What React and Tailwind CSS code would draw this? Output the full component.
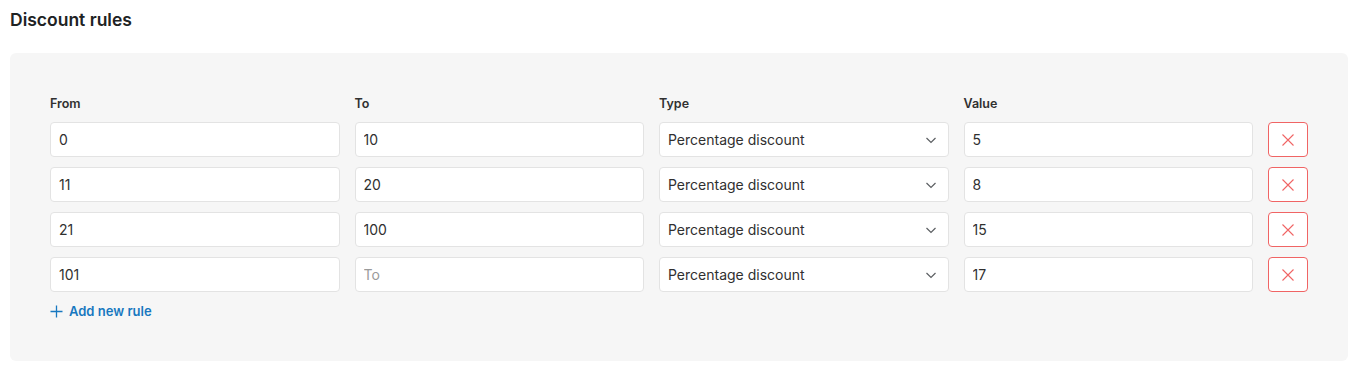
import React from 'react';

const rules = [
  { from: '0', to: '10', value: '5' },
  { from: '11', to: '20', value: '8' },
  { from: '21', to: '100', value: '15' },
  { from: '101', to: '', value: '17' },
];

function Field({ value, placeholder }) {
  return (
    <input
      readOnly
      value={value}
      placeholder={placeholder}
      className="h-[35px] w-full rounded-[4px] border border-[#e3e3e3] bg-white px-2 text-[14px] text-[#303030] placeholder:text-[#9a9a9a] outline-none"
    />
  );
}

export default function App() {
  return (
    <div className="bg-white px-[10px] pt-[10px] pb-[12px] font-['Inter',sans-serif] text-[#303030]">
      <h2 className="text-[17.5px] font-semibold leading-[20px] text-[#202223]">Discount rules</h2>
      <div className="mt-[23px] rounded-[6px] bg-[#f6f6f6] px-[40px] pt-[43px] pb-[39px]">
        <div className="grid grid-cols-[1fr_1fr_1fr_1fr_40px] gap-x-[15px] gap-y-[10px]">
          <div className="text-[12.5px] font-semibold leading-[16px]">From</div>
          <div className="text-[12.5px] font-semibold leading-[16px]">To</div>
          <div className="text-[12.5px] font-semibold leading-[16px]">Type</div>
          <div className="text-[12.5px] font-semibold leading-[16px]">Value</div>
          <div />
          {rules.map((r, i) => (
            <React.Fragment key={i}>
              <Field value={r.from} />
              <Field value={r.to} placeholder="To" />
              <div className="flex h-[35px] items-center justify-between rounded-[4px] border border-[#e3e3e3] bg-white pl-2 pr-[10px] text-[14px]">
                <span>Percentage discount</span>
                <svg width="14" height="14" viewBox="0 0 14 14" fill="none" stroke="#5c5f62" strokeWidth="1.2">
                  <path d="M2.5 5l4.5 4.5L11.5 5" />
                </svg>
              </div>
              <Field value={r.value} />
              <button className="flex h-[35px] w-[40px] items-center justify-center rounded-[4px] border border-[#f06464] bg-white">
                <svg width="14" height="14" viewBox="0 0 14 14" fill="none" stroke="#f06464" strokeWidth="1.1">
                  <path d="M1.5 1.5l11 11M12.5 1.5l-11 11" />
                </svg>
              </button>
            </React.Fragment>
          ))}
        </div>
        <button className="mt-[10px] flex items-center gap-[6px] text-[13px] font-semibold text-[#1878c0]">
          <svg width="13" height="13" viewBox="0 0 13 13" fill="none" stroke="#1878c0" strokeWidth="1.3">
            <path d="M6.5 0.5v12M0.5 6.5h12" />
          </svg>
          Add new rule
        </button>
      </div>
    </div>
  );
}
